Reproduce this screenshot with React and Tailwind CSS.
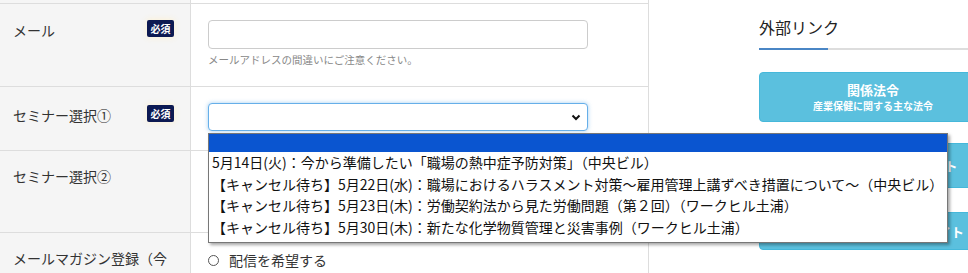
import React from "react";

const options = [
  "5月14日(火)：今から準備したい「職場の熱中症予防対策」（中央ビル）",
  "【キャンセル待ち】5月22日(水)：職場におけるハラスメント対策～雇用管理上講ずべき措置について～（中央ビル）",
  "【キャンセル待ち】5月23日(木)：労働契約法から見た労働問題（第２回）（ワークヒル土浦）",
  "【キャンセル待ち】5月30日(木)：新たな化学物質管理と災害事例（ワークヒル土浦）",
];

const Badge = () => (
  <span className="mt-[1px] flex h-[17px] w-[27px] items-center justify-center rounded-[2px] bg-[#0d1a52] text-[10px] font-bold leading-none text-white shadow-[0_0_6px_rgba(255,240,200,0.9)]">
    必須
  </span>
);

const Row = ({ label, badge, labelPt, height, children, last }) => (
  <div className={`flex ${last ? "" : "border-b border-[#dddddd]"}`} style={{ height }}>
    <div
      className="flex w-[191px] shrink-0 items-start justify-between border-r border-[#dddddd] bg-[#f5f5f5] pl-[13px] pr-[16px]"
      style={{ paddingTop: labelPt }}
    >
      <span className="text-[14px] leading-[22px] text-[#333]">{label}</span>
      {badge && <Badge />}
    </div>
    <div className="flex-1 border-r border-[#dddddd] pl-[17px]">{children}</div>
  </div>
);

const SideButton = ({ title, sub, className }) => (
  <div
    className={`flex w-[228px] flex-col items-center justify-center rounded-[4px] border border-[#46b8da] bg-[#5bc0de] text-white ${className}`}
  >
    <span className="text-[13px] font-bold leading-[17px]">{title}</span>
    {sub && <span className="text-[10px] font-bold leading-[15px]">{sub}</span>}
  </div>
);

export default function App() {
  return (
    <div
      className="relative flex h-[273px] w-[968px] overflow-hidden bg-white"
      style={{ fontFamily: '"Noto Sans CJK JP", "Noto Sans", sans-serif' }}
    >
      {/* form table */}
      <div className="w-[649px] shrink-0">
        <div className="flex h-[4px] border-b border-[#dddddd]">
          <div className="w-[191px] border-r border-[#dddddd] bg-[#f5f5f5]" />
          <div className="flex-1 border-r border-[#dddddd]" />
        </div>

        <Row label="メール" badge labelPt={15} height={83}>
          <div className="pt-[16px]">
            <div className="h-[29px] w-[380px] rounded-[4px] border border-[#cccccc] bg-white" />
            <p className="mt-[4px] text-[10.5px] leading-[14px] text-[#888]">
              メールアドレスの間違いにご注意ください。
            </p>
          </div>
        </Row>

        <Row label="セミナー選択①" badge labelPt={17} height={64}>
          <div className="pt-[16px]">
            <div className="flex h-[28px] w-[380px] items-center justify-end rounded-[4px] border border-[#66afe9] bg-white pr-[6px] shadow-[0_0_4px_rgba(102,175,233,0.6)]">
              <svg width="10" height="7" viewBox="0 0 10 7">
                <path d="M1.5 1.5 5 5 8.5 1.5" fill="none" stroke="#111" strokeWidth="2" />
              </svg>
            </div>
          </div>
        </Row>

        <Row label="セミナー選択②" labelPt={14} height={82} />

        <Row label="メールマガジン登録（今" labelPt={14} height={60} last>
          <div className="flex items-center gap-[10px] pt-[16px]">
            <span className="h-[11px] w-[11px] rounded-full border border-[#555]" />
            <span className="text-[14px] leading-[22px] text-[#333]">配信を希望する</span>
          </div>
        </Row>
      </div>

      {/* sidebar */}
      <div className="ml-[110px] shrink-0 pt-[15px]">
        <h2 className="text-[16px] leading-[24px] text-[#222]">外部リンク</h2>
        <div className="mt-[9px] flex h-[2px] w-[240px] bg-[#dddddd]">
          <div className="w-[69px] bg-[#4a86c5]" />
        </div>
        <SideButton title="関係法令" sub="産業保健に関する主な法令" className="mt-[22px] h-[50px]" />
        <SideButton title="労働者健康安全機構のサイト" className="mt-[21px] h-[45px]" />
        <SideButton title="産業保健に関するリンクサイト" className="mt-[24px] h-[38px]" />
      </div>

      {/* open select dropdown */}
      <div className="absolute left-[208px] top-[133px] w-[740px] border border-[#777] bg-white pb-[4px] shadow-[2px_2px_3px_rgba(0,0,0,0.35)]">
        <div className="h-[18px] bg-[#0a55d0]" />
        {options.map((o) => (
          <div key={o} className="h-[21.5px] whitespace-nowrap pl-[3px] text-[14px] leading-[21.5px] text-[#111]">
            {o}
          </div>
        ))}
      </div>
    </div>
  );
}
